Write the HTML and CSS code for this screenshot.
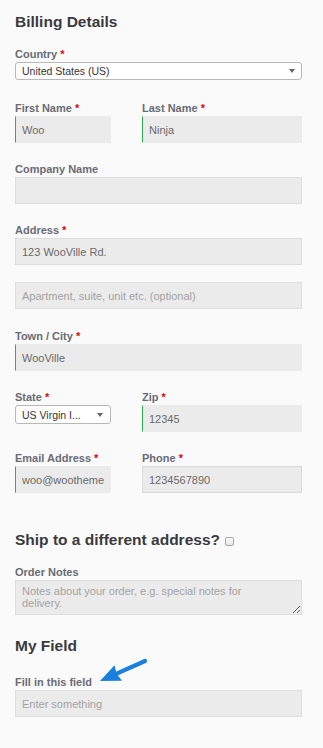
FILE: index.html
```html
<!DOCTYPE html>
<html lang="en">
<head>
<meta charset="utf-8">
<title>Billing Details</title>
<link rel="stylesheet" href="styles.css">
</head>
<body>
<div class="page">
  <h2 class="title">Billing Details</h2>

  <div class="field mt-16">
    <label class="lbl">Country <abbr class="req">*</abbr></label>
    <div class="select"><span class="select-text">United States (US)</span><span class="caret"></span></div>
  </div>

  <div class="row mt-22">
    <div class="field">
      <label class="lbl">First Name <abbr class="req">*</abbr></label>
      <input class="input valid" type="text" value="Woo">
    </div>
    <div class="field">
      <label class="lbl">Last Name <abbr class="req">*</abbr></label>
      <input class="input valid" type="text" value="Ninja">
    </div>
  </div>

  <div class="field mt-20">
    <label class="lbl">Company Name</label>
    <input class="input" type="text" value="">
  </div>

  <div class="field mt-20">
    <label class="lbl">Address <abbr class="req">*</abbr></label>
    <input class="input" type="text" value="123 WooVille Rd.">
  </div>

  <div class="field mt-17">
    <input class="input" type="text" placeholder="Apartment, suite, unit etc. (optional)">
  </div>

  <div class="field mt-21">
    <label class="lbl">Town / City <abbr class="req">*</abbr></label>
    <input class="input valid" type="text" value="WooVille">
  </div>

  <div class="row mt-20">
    <div class="field">
      <label class="lbl">State <abbr class="req">*</abbr></label>
      <div class="select select-sm"><span class="select-text">US Virgin I...</span><span class="caret"></span></div>
    </div>
    <div class="field">
      <label class="lbl">Zip <abbr class="req">*</abbr></label>
      <input class="input valid" type="text" value="12345">
    </div>
  </div>

  <div class="row mt-20">
    <div class="field">
      <label class="lbl">Email Address <abbr class="req">*</abbr></label>
      <input class="input valid" type="text" value="woo@woothemes.com">
    </div>
    <div class="field">
      <label class="lbl">Phone <abbr class="req">*</abbr></label>
      <input class="input phone" type="text" value="1234567890">
    </div>
  </div>

  <h3 class="title mt-37">Ship to a different address? <span class="check"></span></h3>

  <div class="field mt-16">
    <label class="lbl">Order Notes</label>
    <textarea class="input notes" placeholder="Notes about your order, e.g. special notes for delivery."></textarea>
  </div>

  <h3 class="title mt-21">My Field</h3>

  <div class="field mt-20">
    <label class="lbl">Fill in this field</label>
    <input class="input" type="text" placeholder="Enter something">
  </div>

  <svg class="arrow" width="56" height="32" viewBox="0 0 56 32" aria-hidden="true">
    <line x1="50" y1="6" x2="20" y2="19.3" stroke="#1a80e0" stroke-width="4.2" stroke-linecap="round"/>
    <polygon points="5,26 19.5,10.2 21.5,18.6 27,25.8" fill="#1a80e0"/>
  </svg>
</div>
</body>
</html>
```

FILE: styles.css
```css
* { box-sizing: border-box; }

html, body {
  margin: 0;
  padding: 0;
  background: #fafafa;
}

body {
  font-family: "Liberation Sans", Arial, Helvetica, sans-serif;
  color: #333;
}

.page {
  position: relative;
  padding: 12px 21px 40px 15px;
}

.title {
  margin: 0;
  font-size: 15.5px;
  line-height: 20px;
  font-weight: 700;
  color: #3a3a3e;
  display: flex;
  align-items: center;
}

.mt-16 { margin-top: 16px; }
.mt-17 { margin-top: 17px; }
.mt-20 { margin-top: 20px; }
.mt-21 { margin-top: 21px; }
.mt-22 { margin-top: 22px; }
.mt-37 { margin-top: 37px; }

.field {
  display: flex;
  flex-direction: column;
}

.row {
  display: grid;
  grid-template-columns: 96px 1fr;
  column-gap: 31px;
  align-items: start;
}

.lbl {
  display: block;
  font-size: 11px;
  line-height: 12px;
  font-weight: 700;
  color: #696c74;
  margin-bottom: 2px;
  white-space: nowrap;
}

.req {
  color: #e4000f;
  text-decoration: none;
  border: 0;
}

.input {
  display: block;
  width: 100%;
  height: 27px;
  margin: 0;
  padding: 0 6px;
  border: 1px solid #dedede;
  border-radius: 0;
  background: #ebebeb;
  font-family: "Liberation Sans", Arial, Helvetica, sans-serif;
  font-size: 11px;
  color: #6a6a6a;
  outline: none;
}

.input::placeholder {
  color: #a3a3a3;
  opacity: 1;
}

.valid {
  border-color: #ebebeb;
  border-left-color: #2fae55;
}

.phone {
  border-color: #d9d9d9;
}

.notes {
  height: 35px;
  padding: 5px 36px 5px 6px;
  line-height: 11.5px;
  resize: vertical;
  overflow: hidden;
}

.select {
  display: flex;
  align-items: center;
  justify-content: space-between;
  height: 18px;
  padding: 0 6px 0 6px;
  background: #fff;
  border: 1px solid #b8b8b8;
  border-radius: 3px;
  font-size: 10.5px;
  color: #333;
  white-space: nowrap;
  overflow: hidden;
}

.select-sm {
  height: 19px;
  padding-right: 7px;
}

.select-text {
  overflow: hidden;
}

.caret {
  flex: none;
  width: 0;
  height: 0;
  border-left: 3.5px solid transparent;
  border-right: 3.5px solid transparent;
  border-top: 4px solid #666;
  margin-left: 6px;
}

.check {
  display: inline-block;
  width: 9px;
  height: 9px;
  margin-left: 5px;
  margin-top: 3px;
  border: 1px solid #a9a9a9;
  border-radius: 2px;
  background: linear-gradient(#fdfdfd, #e6e6e6);
}

.arrow {
  position: absolute;
  left: 95px;
  top: 655px;
}
```
